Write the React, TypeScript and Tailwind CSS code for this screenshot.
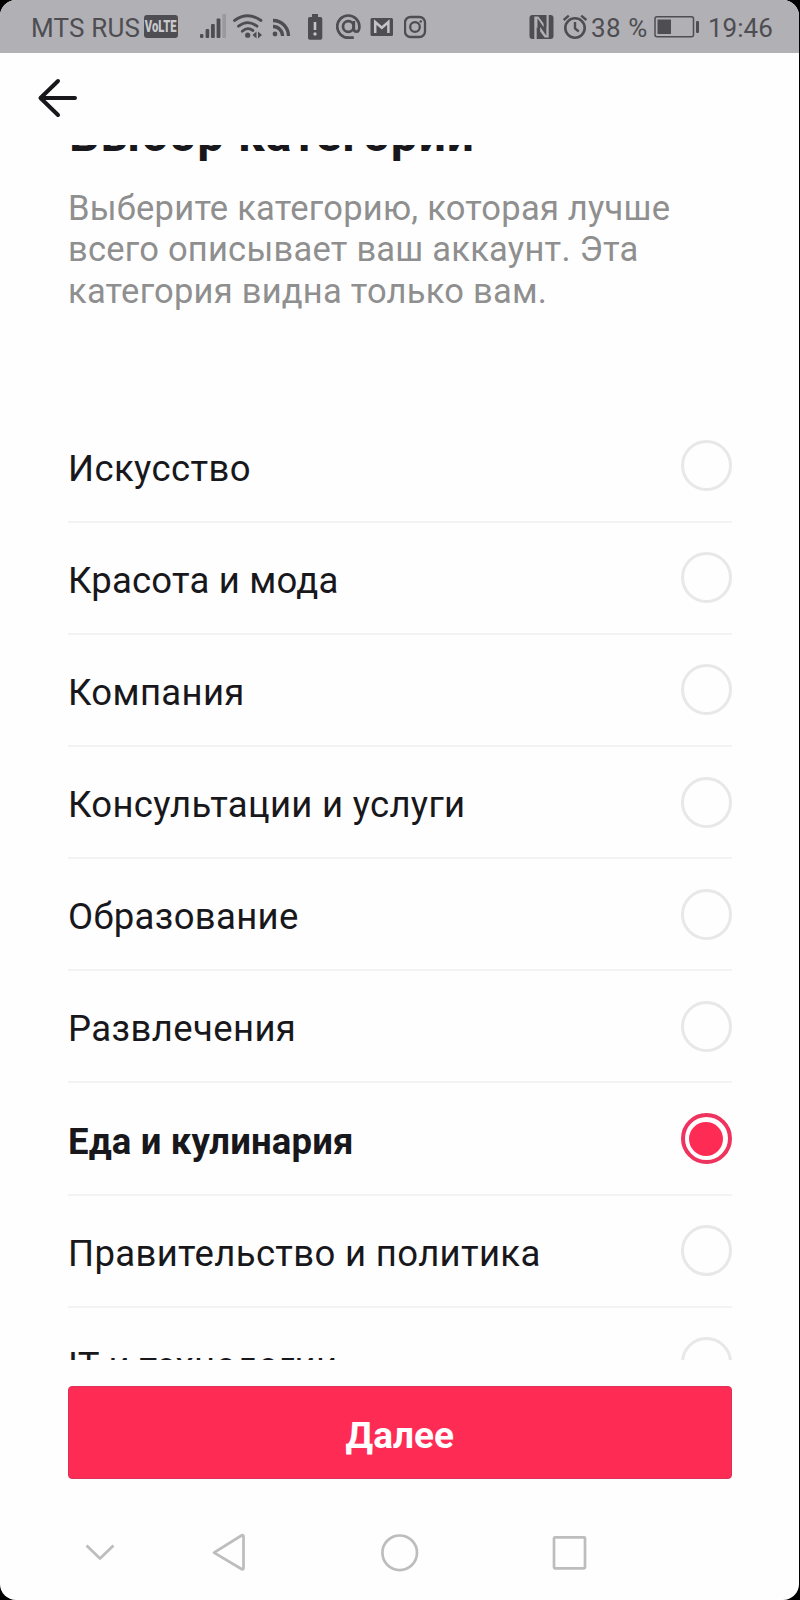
import type { ReactNode } from "react";

const categories = [
  { label: "Искусство", tracking: "tracking-[0.4px]" },
  { label: "Красота и мода", tracking: "tracking-[0.2px]" },
  { label: "Компания", tracking: "tracking-[0.35px]" },
  { label: "Консультации и услуги", tracking: "tracking-[0.3px]" },
  { label: "Образование", tracking: "tracking-[0.35px]" },
  { label: "Развлечения", tracking: "tracking-[0.4px]" },
  { label: "Еда и кулинария", tracking: "tracking-[0.15px]", selected: true },
  { label: "Правительство и политика", tracking: "tracking-[0.35px]" },
  { label: "IT и технологии", tracking: "tracking-[0.35px]" },
];

function Glyph({ x, w, children }: { x: number; w: number; children: ReactNode }) {
  return (
    <svg width={w} height={53} viewBox={`${x} 0 ${w} 53`} fill="none" stroke="#4d4d52" className="block shrink-0">
      {children}
    </svg>
  );
}

function StatusBar() {
  return (
    <header className="flex h-[53px] shrink-0 items-center bg-[#b1b0b5] pl-[31px] text-[26px] leading-[53px] text-[#4d4d52]">
      <span className="w-[113px] shrink-0 whitespace-nowrap pt-[3px] tracking-[0.2px]">MTS RUS</span>
      <span className="flex h-[23px] w-[34px] shrink-0 items-center justify-center rounded-[3px] bg-[#4d4d52]">
        <span className="scale-x-[0.7] text-[16px] leading-none font-black text-[#c9c8cc]">VoLTE</span>
      </span>
      <div className="ml-[22px] flex shrink-0">
        <Glyph x={200} w={33}>
          <g fill="#4d4d52" stroke="none">
            <rect x="200" y="34" width="3.4" height="4" rx="1" />
            <rect x="205.6" y="29" width="3.6" height="9" rx="1" />
            <rect x="211" y="24" width="3.8" height="14" rx="1" />
            <rect x="216.6" y="18.5" width="3.8" height="19.5" rx="1" />
            <rect x="222.4" y="14" width="3.6" height="24" rx="1" fill="#9a999e" />
          </g>
        </Glyph>
        <Glyph x={233} w={39}>
          <g strokeWidth="2.8" strokeLinecap="round">
            <path d="M234.5 20.5Q247.8 11 261 20.5" />
            <path d="M238.5 26.2Q247.8 19 257 26.2" />
            <path d="M242.3 31.2Q247.5 26.5 253 30.5" />
          </g>
          <g fill="#4d4d52" stroke="none">
            <circle cx="247.7" cy="35.2" r="2.6" />
            <path d="M252.5 35l4-3.6v7.2zM262 35l-4-3.6v7.2z" />
          </g>
        </Glyph>
        <Glyph x={272} w={36}>
          <path d="M273 20.5A15.5 15.5 0 0 1 288.5 36M273 26.5A9.5 9.5 0 0 1 282.5 36" strokeWidth="3.3" />
          <circle cx="275" cy="34" r="2.4" fill="#4d4d52" stroke="none" />
        </Glyph>
        <Glyph x={308} w={28}>
          <path d="M312 14h6v3h2.5q1.8 0 1.8 1.8V38q0 1.8-1.8 1.8h-10.7Q308 39.8 308 38V18.8Q308 17 309.8 17H312z" fill="#4d4d52" stroke="none" />
          <path d="M315 22v8" stroke="#c4c3c8" strokeWidth="2.6" />
          <circle cx="315" cy="34" r="1.7" fill="#c4c3c8" stroke="none" />
        </Glyph>
        <Glyph x={336} w={34}>
          <g strokeWidth="2.7">
            <circle cx="348.3" cy="26.5" r="5.3" />
            <path d="M353.8 21v7.5q0 3.2 2.8 3.2t2.8-5.2A11.1 11.1 0 1 0 348.3 37.7h5.5" />
          </g>
        </Glyph>
        <Glyph x={370} w={34}>
          <rect x="370.5" y="18" width="22.5" height="18" rx="1.5" fill="#4d4d52" stroke="none" />
          <path d="M375.2 33V22l6.6 5.8 6.6-5.8v11" stroke="#c4c3c8" strokeWidth="2.5" />
        </Glyph>
        <Glyph x={404} w={24}>
          <rect x="405" y="17" width="20" height="20" rx="5.5" strokeWidth="2.3" />
          <circle cx="415" cy="27" r="4.8" strokeWidth="2.3" />
          <circle cx="420.7" cy="21.5" r="1.3" fill="#4d4d52" stroke="none" />
        </Glyph>
      </div>
      <div className="ml-[101px] flex shrink-0">
        <Glyph x={529} w={34}>
          <rect x="529.5" y="15" width="24" height="24" rx="3" fill="#4d4d52" stroke="none" />
          <path d="M534.3 37.500V16.500h4l8 10.500V15h2.400v22.500h-4l-8-10.500V39h-2.400z" fill="#b1b0b5" stroke="none" />
          <path d="M538.8 39V22.500L545 31.500V15" strokeWidth="2.7" />
        </Glyph>
        <Glyph x={563} w={28}>
          <circle cx="575" cy="28" r="9.7" strokeWidth="2.6" />
          <path d="M575 22v6.5l3.8 3M563.6 20l5.2-4.4M586.4 20l-5.2-4.4" strokeWidth="2.4" />
        </Glyph>
      </div>
      <span className="w-[63px] shrink-0 whitespace-nowrap pt-[3px] tracking-[0.5px]">38 %</span>
      <Glyph x={654} w={54}>
        <rect x="655" y="16.8" width="38.5" height="20" rx="2" strokeWidth="1.5" />
        <rect x="657.5" y="19.5" width="13.5" height="14.5" fill="#4d4d52" stroke="none" />
        <rect x="696" y="21" width="3" height="12" rx="1" fill="#4d4d52" stroke="none" />
      </Glyph>
      <span className="shrink-0 pt-[3px]">19:46</span>
    </header>
  );
}

function Radio({ selected }: { selected?: boolean }) {
  return selected ? (
    <span className="flex size-[51px] shrink-0 items-center justify-center rounded-full border-4 border-[#ee335e]">
      <span className="size-[34px] rounded-full bg-[#fe2c55]" />
    </span>
  ) : (
    <span className="size-[51px] shrink-0 rounded-full border-3 border-[#e8e8e8]" />
  );
}

export default function App() {
  return (
    <div className="h-[1600px] w-[800px] overflow-hidden bg-black pr-px font-[Roboto,sans-serif]">
      <div className="flex h-full flex-col overflow-hidden rounded-[16px] bg-[#fefefe] text-[#18181c]">
        <StatusBar />
        <div className="h-[92px] shrink-0 pt-[25px] pl-[36px]">
          <svg width="44" height="40" viewBox="36 78 44 40" fill="none" stroke="#18181c" strokeWidth="4" strokeLinecap="round" strokeLinejoin="round">
            <path d="M75 98H40.5M58 81L40.5 98L58 115" />
          </svg>
        </div>
        <main className="flex h-[1215px] shrink-0 flex-col overflow-hidden pr-[67.5px] pl-[68px]">
          <h1 className="-mt-[40px] ml-px h-[60px] shrink-0 text-[48px] leading-[60px] font-bold whitespace-nowrap tracking-[0.85px]">Выбор категории</h1>
          <p className="mt-[23px] h-[222.6px] shrink-0 text-[34.5px] leading-[41.4px] whitespace-nowrap tracking-[0.24px] text-[#8f8f8f]">
            Выберите категорию, которая лучше
            <br />
            всего описывает ваш аккаунт. Эта
            <br />
            категория видна только вам.
          </p>
          <ul className="shrink-0">
            {categories.map((c) => (
              <li key={c.label} className="flex h-[112.15px] items-center justify-between border-b-2 border-[#f3f3f3]">
                <span className={`pt-[6px] text-[36.5px] leading-[44px] whitespace-nowrap ${c.tracking} ${c.selected ? "font-bold" : ""}`}>{c.label}</span>
                <Radio selected={c.selected} />
              </li>
            ))}
          </ul>
        </main>
        <button className="mt-[26px] ml-[68px] flex h-[93px] w-[663.5px] shrink-0 items-center justify-center rounded-[4px] border border-[#dc3158] bg-[#fe2c55] pt-[6px] text-[37px] font-bold text-white">
          Далее
        </button>
        <nav className="mt-[43px] flex shrink-0 pl-[80px]">
          <svg width="520" height="60" viewBox="80 1522 520 60" fill="none" stroke="#bdbdbd" strokeWidth="2.7" strokeLinejoin="round">
            <path d="M86.5 1545.5l13.5 13 13.5-13" />
            <path d="M214 1552.7L241.5 1535.5q2-1 2 1v31.5q0 2-2 1z" />
            <circle cx="399.7" cy="1552.8" r="17.3" />
            <rect x="554" y="1537.3" width="31" height="31" rx="1" />
          </svg>
        </nav>
      </div>
    </div>
  );
}
